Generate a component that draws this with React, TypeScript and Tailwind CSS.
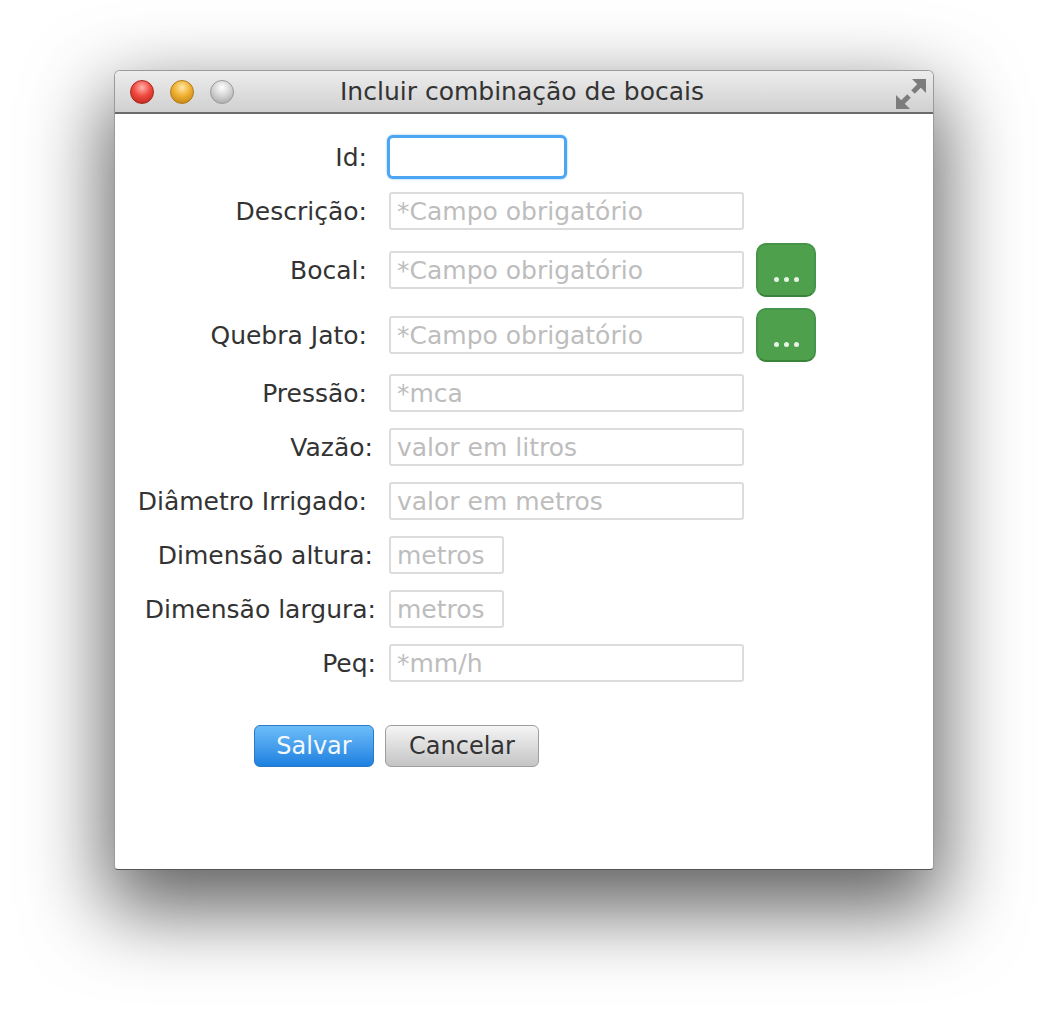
import React from "react";

type Row = {
  label: string;
  pr: string;
  mt: string;
  kind: "id" | "wide" | "small" | "pick";
  placeholder?: string;
};

const rows: Row[] = [
  { label: "Id:", pr: "pr-[9px]", mt: "mt-[21px]", kind: "id" },
  { label: "Descrição:", pr: "pr-[9px]", mt: "mt-[13px]", kind: "wide", placeholder: "*Campo obrigatório" },
  { label: "Bocal:", pr: "pr-[9px]", mt: "mt-[13px]", kind: "pick", placeholder: "*Campo obrigatório" },
  { label: "Quebra Jato:", pr: "pr-[9px]", mt: "mt-[11px]", kind: "pick", placeholder: "*Campo obrigatório" },
  { label: "Pressão:", pr: "pr-[9px]", mt: "mt-[12px]", kind: "wide", placeholder: "*mca" },
  { label: "Vazão:", pr: "pr-[3px]", mt: "mt-[16px]", kind: "wide", placeholder: "valor em litros" },
  { label: "Diâmetro Irrigado:", pr: "pr-[9px]", mt: "mt-[16px]", kind: "wide", placeholder: "valor em metros" },
  { label: "Dimensão altura:", pr: "pr-[3px]", mt: "mt-[16px]", kind: "small", placeholder: "metros" },
  { label: "Dimensão largura:", pr: "pr-0", mt: "mt-[16px]", kind: "small", placeholder: "metros" },
  { label: "Peq:", pr: "pr-0", mt: "mt-[16px]", kind: "wide", placeholder: "*mm/h" },
];

function TextBox({ width, placeholder }: { width: string; placeholder?: string }) {
  return (
    <div
      className={`${width} h-[38px] ml-[13px] flex items-center pl-[6px] border-2 border-[#dcdcdc] rounded-[3px] bg-white text-[25px] text-[#bdbdbd] leading-none whitespace-nowrap overflow-hidden`}
    >
      {placeholder}
    </div>
  );
}

function Light({ color }: { color: string }) {
  return <div className={`w-[24px] h-[24px] rounded-full ${color}`} />;
}

function ResizeIcon() {
  return (
    <svg width="30" height="30" viewBox="0 0 30 30">
      <polygon points="30,0 30,14 16,0" fill="#7c7c7c" />
      <line x1="25" y1="5" x2="17" y2="13" stroke="#7c7c7c" strokeWidth="5" />
      <polygon points="0,30 0,16 14,30" fill="#7c7c7c" />
      <line x1="5" y1="25" x2="13" y2="17" stroke="#7c7c7c" strokeWidth="5" />
    </svg>
  );
}

function PickButton() {
  return (
    <button className="ml-[12px] w-[60px] h-[54px] rounded-[10px] bg-[#4fa04d] border-2 border-[#45944a] border-b-[#3a833a] flex items-center justify-center gap-[5px] pt-[18px]">
      <span className="w-[5px] h-[5px] rounded-full bg-[#e6f2e6]" />
      <span className="w-[5px] h-[5px] rounded-full bg-[#e6f2e6]" />
      <span className="w-[5px] h-[5px] rounded-full bg-[#e6f2e6]" />
    </button>
  );
}

export default function App() {
  return (
    <div className="w-[1048px] h-[1028px] bg-white pt-[70px] pl-[114px] overflow-hidden" style={{ fontFamily: "'DejaVu Sans', sans-serif" }}>
      <div className="w-[820px] h-[800px] flex flex-col rounded-t-[6px] rounded-b-[4px] border border-[#9a9a9a] border-b-[#555] bg-white shadow-[0_32px_80px_8px_rgba(0,0,0,0.62)] overflow-hidden">
        {/* title bar */}
        <div className="h-[43px] shrink-0 flex items-center px-[15px] bg-gradient-to-b from-[#ededed] to-[#d0d0d0] border-b-2 border-[#6b6b6b] relative">
          <div className="flex gap-[16px]">
            <Light color="bg-[radial-gradient(circle_at_50%_30%,#ffb4ae_0%,#f04a40_45%,#b01e16_100%)] border border-[#a8241c]" />
            <Light color="bg-[radial-gradient(circle_at_50%_30%,#ffe7a8_0%,#f0b030_45%,#b67a10_100%)] border border-[#b07a18]" />
            <Light color="bg-[radial-gradient(circle_at_50%_30%,#ffffff_0%,#d0d0d0_50%,#9c9c9c_100%)] border border-[#9a9a9a]" />
          </div>
          <div className="flex-1 text-center text-[25px] text-[#333] leading-none pr-[108px]">Incluir combinação de bocais</div>
          <div className="absolute right-[7px] top-[8px]">
            <ResizeIcon />
          </div>
        </div>

        {/* form */}
        <div className="flex-1 flex flex-col">
          {rows.map((r) => (
            <div key={r.label} className={`flex items-center ${r.mt}`}>
              <div className={`w-[261px] text-right text-[25px] text-[#333] leading-none whitespace-nowrap ${r.pr}`}>{r.label}</div>
              {r.kind === "id" && (
                <div className="ml-[11px] w-[180px] h-[44px] rounded-[6px] border-[3px] border-[#4da6f2] bg-white shadow-[0_0_2px_rgba(77,166,242,0.8)]" />
              )}
              {r.kind === "wide" && <TextBox width="w-[355px]" placeholder={r.placeholder} />}
              {r.kind === "small" && <TextBox width="w-[115px]" placeholder={r.placeholder} />}
              {r.kind === "pick" && (
                <>
                  <TextBox width="w-[355px]" placeholder={r.placeholder} />
                  <PickButton />
                </>
              )}
            </div>
          ))}

          <div className="flex mt-[43px] pl-[139px] gap-[11px]">
            <button className="w-[120px] h-[42px] rounded-[6px] border border-[#2a78c8] bg-gradient-to-b from-[#6cbdf8] to-[#1b80e0] text-[#f4f9ff] text-[24px] leading-none">
              Salvar
            </button>
            <button className="w-[154px] h-[42px] rounded-[6px] border border-[#9e9e9e] bg-gradient-to-b from-[#f5f5f5] to-[#c4c4c4] text-[#333] text-[24px] leading-none">
              Cancelar
            </button>
          </div>
        </div>
      </div>
    </div>
  );
}
